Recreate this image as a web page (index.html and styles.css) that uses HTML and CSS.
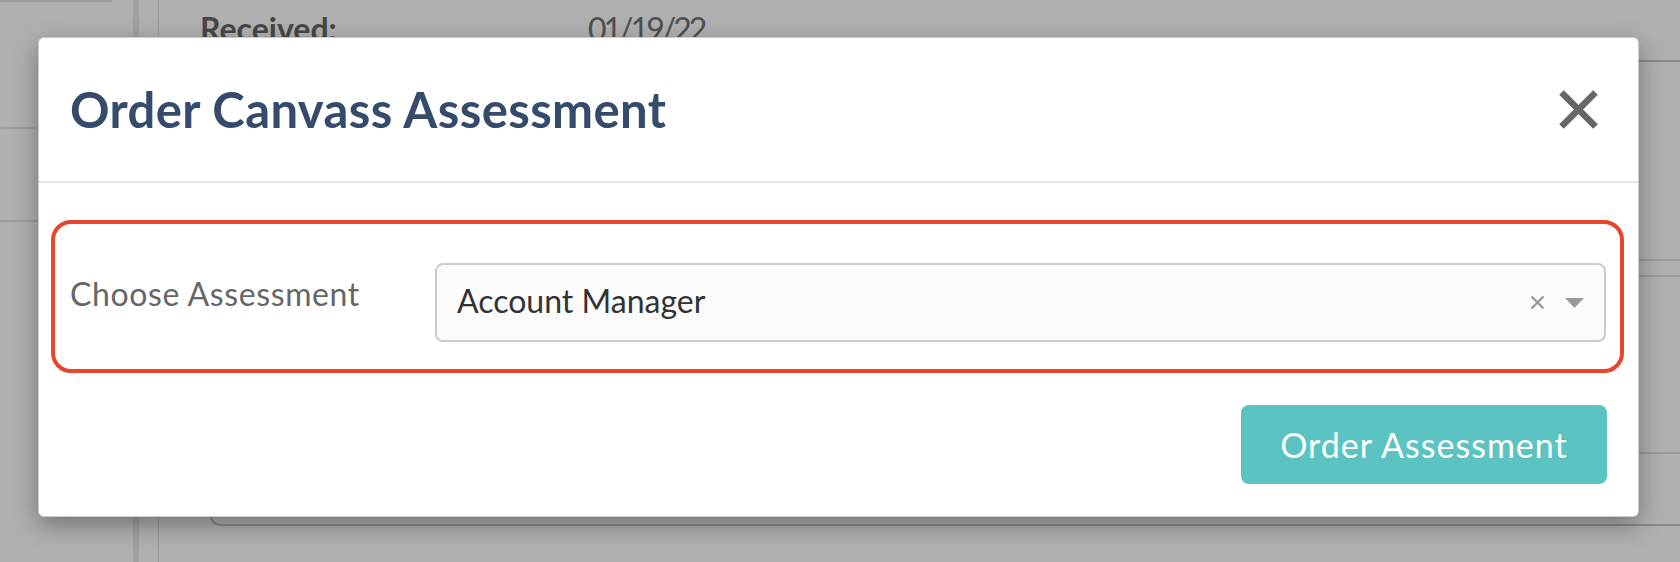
FILE: index.html
```html
<!DOCTYPE html>
<html lang="en">
<head>
<meta charset="utf-8">
<title>Order Canvass Assessment</title>
<link rel="stylesheet" href="styles.css">
</head>
<body>
<div class="page">
  <aside class="sidebar">
    <div class="side-top"></div>
    <div class="side-item side-item-1"></div>
    <div class="side-item side-item-2"></div>
  </aside>
  <div class="sidebar-rule"></div>
  <div class="gutter"></div>
  <main class="main">
    <div class="info-row">
      <span class="info-label">Received:</span>
      <span class="info-value">01/19/22</span>
    </div>
    <div class="card">
      <div class="card-sec card-sec-1"></div>
      <div class="card-sec card-sec-2"></div>
      <div class="card-sec card-sec-3"></div>
      <div class="card-sec card-sec-4"></div>
    </div>
  </main>
</div>
<div class="backdrop"></div>
<div class="modal" role="dialog" aria-labelledby="modal-title">
  <div class="modal-header">
    <h2 class="modal-title" id="modal-title">Order Canvass Assessment</h2>
    <button class="close-btn" type="button" aria-label="Close">
      <svg width="39" height="39" viewBox="0 0 39 39" aria-hidden="true">
        <line x1="2.5" y1="2.5" x2="36.5" y2="36.5" />
        <line x1="36.5" y1="2.5" x2="2.5" y2="36.5" />
      </svg>
    </button>
  </div>
  <div class="modal-body">
    <div class="assess-box">
      <label class="assess-label">Choose Assessment</label>
      <div class="assess-select">
        <span class="assess-value">Account Manager</span>
        <span class="assess-icons">
          <svg class="clear-icon" width="15" height="13" viewBox="0 0 15 13" aria-hidden="true">
            <line x1="1.5" y1="0.5" x2="13.5" y2="12.5" />
            <line x1="13.5" y1="0.5" x2="1.5" y2="12.5" />
          </svg>
          <svg class="caret-icon" width="19" height="10" viewBox="0 0 19 10" aria-hidden="true">
            <polygon points="0,0 19,0 9.5,10" />
          </svg>
        </span>
      </div>
    </div>
  </div>
  <div class="modal-footer">
    <button class="order-btn" type="button">Order Assessment</button>
  </div>
</div>
</body>
</html>
```
FILE: styles.css
```css
* { box-sizing: border-box; }

html, body {
  margin: 0;
  padding: 0;
}

body {
  width: 1680px;
  height: 562px;
  overflow: hidden;
  background: #ffffff;
  font-family: Lato, "Liberation Sans", sans-serif;
  position: relative;
}

/* ---------- background page ---------- */
.page {
  display: flex;
  height: 562px;
  overflow: hidden;
}

.sidebar {
  width: 133px;
  flex: none;
  display: flex;
  flex-direction: column;
}

.side-top {
  width: 112px;
  height: 2px;
  background: #e4e4e4;
}

.side-item {
  border-bottom: 2px solid #e4e4e4;
}

.side-item-1 { height: 127px; }
.side-item-2 { height: 93px; }

.sidebar-rule {
  width: 6px;
  flex: none;
  background: #e8e8e8;
}

.gutter {
  width: 19px;
  flex: none;
}

.main {
  flex: 1;
  border-left: 1px solid #dcdcdc;
  padding-left: 41px;
}

.info-row {
  display: flex;
  padding-top: 13px;
  font-size: 32px;
  line-height: 32px;
}

.info-label {
  width: 388px;
  font-weight: 700;
  color: #676767;
}

.info-value {
  color: #747474;
  letter-spacing: -3px;
}

.card {
  margin-top: 15px;
  margin-left: 10px;
  border: 2px solid #c8c8c8;
  border-right: none;
  border-radius: 10px 0 0 10px;
}

.card-sec { border-bottom: 2px solid #dfdfdf; }
.card-sec-1 { height: 199px; }
.card-sec-2 { height: 16px; }
.card-sec-3 { height: 177px; }
.card-sec-4 { height: 70px; border-bottom: none; }

.backdrop {
  position: absolute;
  inset: 0;
  background: rgba(0, 0, 0, 0.31);
}

/* ---------- modal ---------- */
.modal {
  position: absolute;
  top: 37px;
  left: 38px;
  width: 1601px;
  background: #ffffff;
  border: 1px solid rgba(0, 0, 0, 0.2);
  border-radius: 6px;
  box-shadow: 0 8px 24px rgba(0, 0, 0, 0.35);
}

.modal-header {
  height: 145px;
  display: flex;
  align-items: center;
  justify-content: space-between;
  padding: 0 40px 0 31px;
  border-bottom: 2px solid #e5e5e5;
}

.modal-title {
  margin: 0;
  font-size: 49px;
  line-height: 1;
  font-weight: 700;
  color: #354b6b;
  letter-spacing: 0.4px;
}

.close-btn {
  border: 0;
  padding: 0;
  margin: 0;
  background: transparent;
  width: 39px;
  height: 39px;
  display: flex;
}

.close-btn line {
  stroke: #666666;
  stroke-width: 6.5;
}

.modal-body {
  padding: 37px 14px 0 12px;
}

.assess-box {
  display: flex;
  align-items: flex-start;
  border: 4px solid #e8452c;
  border-radius: 20px;
  padding: 39px 14px 27px 15px;
}

.assess-label {
  width: 365px;
  flex: none;
  padding-top: 15px;
  font-size: 32px;
  line-height: 32px;
  color: #666666;
  letter-spacing: 0.6px;
}

.assess-select {
  flex: 1;
  height: 79px;
  display: flex;
  align-items: center;
  justify-content: space-between;
  padding: 0 20px 0 20px;
  background: #fbfbfb;
  border: 2px solid #cccccc;
  border-radius: 8px;
}

.assess-value {
  font-size: 32px;
  line-height: 32px;
  color: #333333;
  margin-top: -4px;
}

.assess-icons {
  display: flex;
  align-items: center;
  gap: 20px;
}

.clear-icon line {
  stroke: #999999;
  stroke-width: 2.2;
}

.caret-icon polygon {
  fill: #999999;
}

.modal-footer {
  display: flex;
  justify-content: flex-end;
  padding: 32px 31px 32px;
}

.order-btn {
  width: 366px;
  height: 79px;
  border: 0;
  border-radius: 8px;
  background: #5bc4c3;
  color: #ffffff;
  font-family: Lato, "Liberation Sans", sans-serif;
  font-size: 34px;
  letter-spacing: 1px;
  padding: 0;
}
```
